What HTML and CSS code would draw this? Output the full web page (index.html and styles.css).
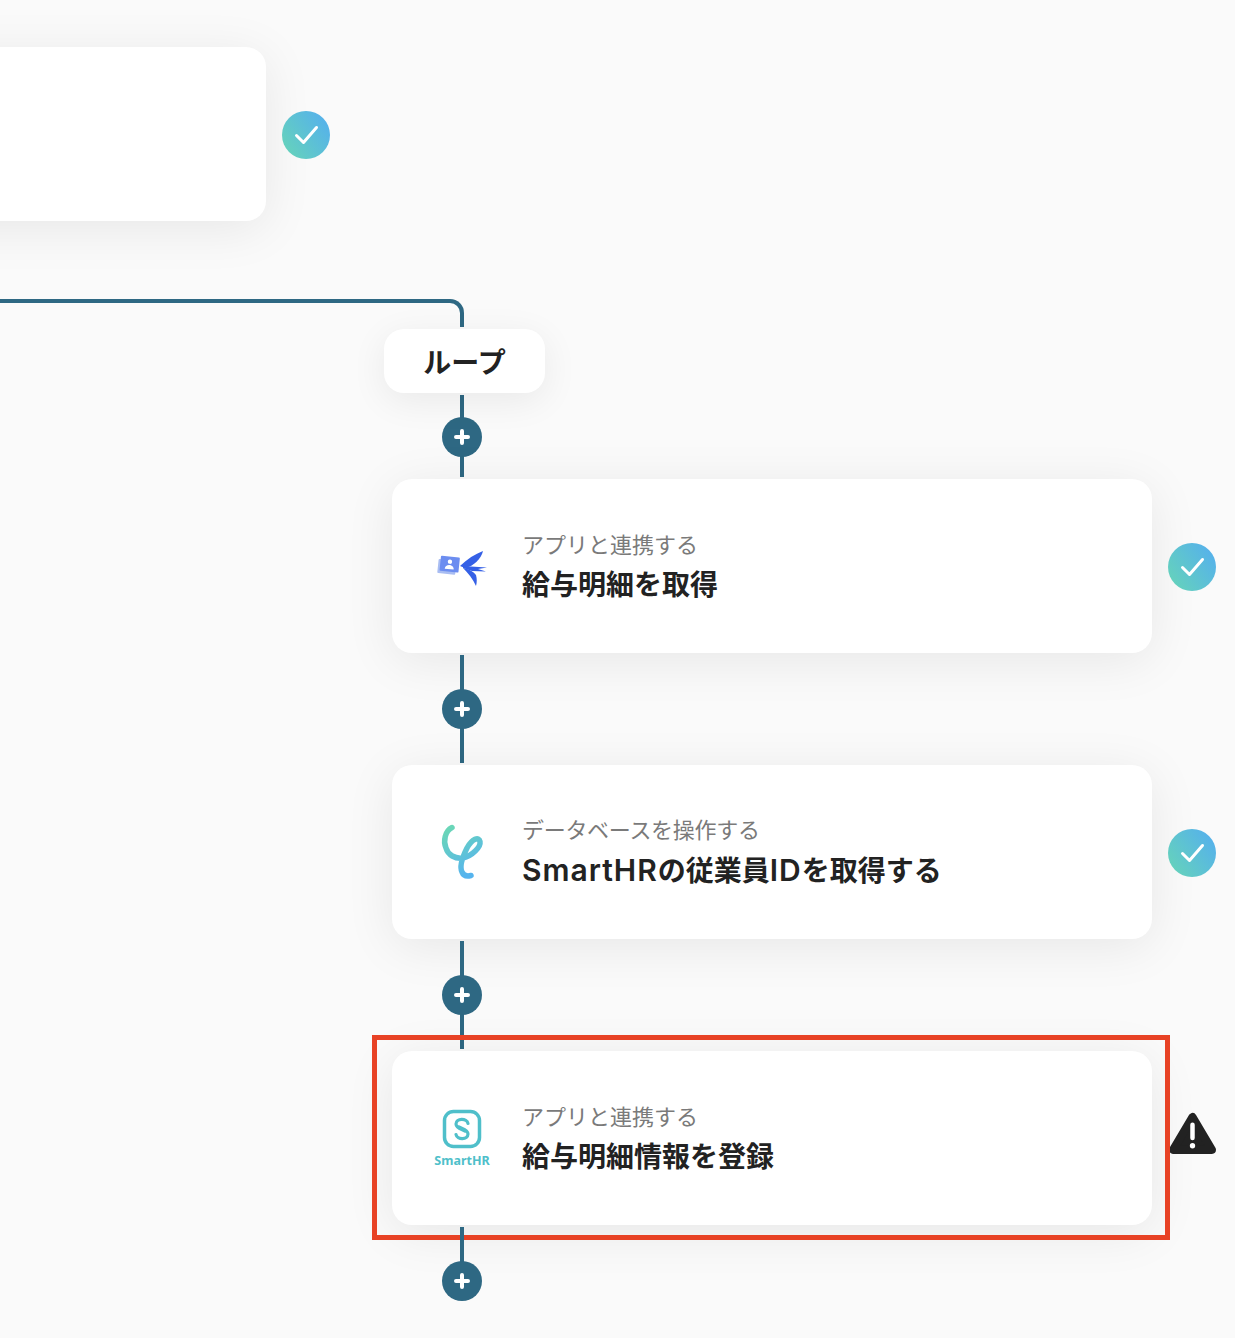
FILE: index.html
```html
<!DOCTYPE html>
<html lang="ja">
<head>
<meta charset="utf-8">
<title>Flow</title>
<link rel="stylesheet" href="styles.css">
</head>
<body>
<svg class="defs" width="0" height="0" aria-hidden="true">
  <defs>
    <linearGradient id="checkGrad" x1="0" y1="1" x2="1" y2="0.3">
      <stop offset="0" stop-color="#67d6b6"/>
      <stop offset="1" stop-color="#56b2ea"/>
    </linearGradient>
    <linearGradient id="dbGrad" x1="0.2" y1="0" x2="0.6" y2="1">
      <stop offset="0" stop-color="#6ad6b8"/>
      <stop offset="1" stop-color="#56b4ee"/>
    </linearGradient>
    <symbol id="check" viewBox="0 0 48 48">
      <circle cx="24" cy="24" r="24" fill="url(#checkGrad)"/>
      <path d="M14.5 24.5l7 7L34.500 16.500" fill="none" stroke="#fff" stroke-width="3" stroke-linecap="round" stroke-linejoin="round"/>
    </symbol>
    <symbol id="plus" viewBox="0 0 40 40">
      <circle cx="20" cy="20" r="20" fill="#2e6883"/>
      <path d="M20 14v12M14 20h12" stroke="#fff" stroke-width="4" stroke-linecap="round"/>
    </symbol>
  </defs>
</svg>

<main class="canvas">
  <div class="start-node">
    <div class="start-card"></div>
    <svg class="status-inline"><use href="#check"/></svg>
  </div>

  <div class="branch-line"></div>

  <div class="flow">
    <div class="pill">ループ</div>

    <div class="connector connector-short">
      <svg class="plus"><use href="#plus"/></svg>
    </div>

    <section class="card">
      <svg class="app-icon" viewBox="0 0 60 60">
        <g transform="rotate(6 16 30)">
          <rect x="6" y="24" width="18" height="14" rx="1" fill="#a9bdf2"/>
          <rect x="8" y="20.500" width="19" height="15" rx="1" fill="#6c8df0"/>
          <circle cx="17.500" cy="25.500" r="2.200" fill="#fff"/>
          <path d="M13 33c0-5.500 9-5.500 9 0z" fill="#fff"/>
        </g>
        <path d="M28 30C35 23 43 18 51 15 49 23 42 30 33 32z" fill="#3560e6"/>
        <path d="M31 30l24 1.500-9 1.500 8 2.500-14-.5-9-3z" fill="#3560e6"/>
        <path d="M31 32c6 1 11 4 13 7 1 4 1 7 0 11-3-7-8-13-13-18z" fill="#3560e6"/>
      </svg>
      <div class="card-text">
        <p class="card-label">アプリと連携する</p>
        <h2 class="card-title">給与明細を取得</h2>
      </div>
      <svg class="status"><use href="#check"/></svg>
    </section>

    <div class="connector">
      <svg class="plus"><use href="#plus"/></svg>
    </div>

    <section class="card">
      <svg class="app-icon" viewBox="0 0 60 60">
        <path d="M20 5.500C13 9 11 19 14 26c2 7 9 11 17 10C40 34 49 25 48 19.500 47 14 40 17 35 26c-4 8-8 18-5 24 1.500 4 5 4.500 9 3.500" fill="none" stroke="url(#dbGrad)" stroke-width="5.500" stroke-linecap="round"/>
      </svg>
      <div class="card-text">
        <p class="card-label card-label-tight">データベースを操作する</p>
        <h2 class="card-title"><span class="latin">SmartHR</span>の従業員<span class="latin">ID</span>を取得する</h2>
      </div>
      <svg class="status"><use href="#check"/></svg>
    </section>

    <div class="connector">
      <svg class="plus"><use href="#plus"/></svg>
    </div>

    <section class="card">
      <div class="smarthr">
        <svg class="smarthr-mark" viewBox="0 0 40 40">
          <rect x="2.500" y="2.500" width="35" height="35" rx="9" fill="none" stroke="#4fbfca" stroke-width="3.500"/>
          <path d="M26 14.500C25 9 14 9 14 15c0 4 5 5 9 7" fill="none" stroke="#4fbfca" stroke-width="3.200" stroke-linecap="round"/>
          <path d="M14 25.500C15 31 26 31 26 25c0-4-5-5-9-7" fill="none" stroke="#4fbfca" stroke-width="3.200" stroke-linecap="round"/>
        </svg>
        <span class="smarthr-name">SmartHR</span>
      </div>
      <div class="card-text">
        <p class="card-label">アプリと連携する</p>
        <h2 class="card-title">給与明細情報を登録</h2>
      </div>
      <svg class="status status-warning" viewBox="0 0 46 42">
        <path d="M23 5L4 37h38z" fill="#222" stroke="#222" stroke-width="8" stroke-linejoin="round"/>
        <path d="M23 12.500v13" stroke="#fff" stroke-width="4.400" stroke-linecap="round"/>
        <circle cx="23" cy="33" r="2.600" fill="#fff"/>
      </svg>
      <div class="highlight"></div>
    </section>

    <div class="connector connector-end">
      <svg class="plus"><use href="#plus"/></svg>
    </div>
  </div>
</main>
</body>
</html>
```

FILE: styles.css
```css
* { box-sizing: border-box; }

html, body {
  margin: 0;
  padding: 0;
  background: #fafafa;
}

body {
  height: 1338px;
  overflow: hidden;
  font-family: Inter, "Noto Sans CJK JP", "Noto Sans", sans-serif;
  color: #222;
}

.defs { position: absolute; }

.canvas {
  position: relative;
  width: 1235px;
  height: 1338px;
  overflow: hidden;
}

.start-node {
  position: absolute;
  left: -100px;
  top: 47px;
  display: flex;
  align-items: center;
  gap: 16px;
}

.start-card {
  width: 366px;
  height: 174px;
  background: #fff;
  border-radius: 20px;
  box-shadow: 0 8px 50px rgba(0, 0, 0, 0.08);
}

.status-inline {
  width: 48px;
  height: 48px;
  margin-top: 2px;
}

.branch-line {
  position: absolute;
  left: -20px;
  top: 299px;
  width: 484px;
  height: 28px;
  border: 4px solid #2e6883;
  border-left: 0;
  border-bottom: 0;
  border-top-right-radius: 14px;
}

.flow {
  position: absolute;
  left: 392px;
  top: 329px;
  width: 760px;
  display: flex;
  flex-direction: column;
}

.pill {
  align-self: flex-start;
  margin-left: -8px;
  width: 161px;
  height: 64px;
  display: flex;
  align-items: center;
  justify-content: center;
  background: #fff;
  border-radius: 20px;
  font-size: 28px;
  font-weight: 700;
  box-shadow: 0 8px 36px rgba(0, 0, 0, 0.07);
  position: relative;
  z-index: 1;
}

.connector {
  position: relative;
  width: 4px;
  height: 108px;
  margin: 2px 0 2px 68px;
  background: #2e6883;
}

.connector-short { height: 82px; }

.connector-end {
  height: 40px;
  margin-bottom: 0;
}

.plus {
  position: absolute;
  left: -18px;
  top: 50%;
  width: 40px;
  height: 40px;
  margin-top: -20px;
}

.connector-short .plus { margin-top: -19px; }

.connector-end .plus {
  top: 34px;
  margin-top: 0;
}

.card {
  position: relative;
  height: 174px;
  display: flex;
  align-items: center;
  gap: 30px;
  padding-left: 40px;
  background: #fff;
  border-radius: 20px;
  box-shadow: 0 8px 50px rgba(0, 0, 0, 0.08);
}

.app-icon {
  width: 60px;
  height: 60px;
  flex: none;
}

.card-text {
  display: flex;
  flex-direction: column;
  gap: 5px;
  padding-top: 2px;
}

.card-label {
  margin: 0;
  font-size: 22px;
  line-height: 30px;
  font-weight: 400;
  color: #7a7a7a;
}

.card-label-tight { letter-spacing: -0.3px; }

.card-title {
  margin: 0;
  font-size: 28px;
  line-height: 40px;
  font-weight: 700;
  color: #222;
}

.latin {
  font-size: 30px;
  font-weight: 600;
  letter-spacing: 1px;
}

.status {
  position: absolute;
  right: -64px;
  top: 64px;
  width: 48px;
  height: 48px;
}

.status-warning {
  right: -64px;
  top: 60px;
  width: 47px;
  height: 45px;
}

.smarthr {
  width: 60px;
  flex: none;
  display: flex;
  flex-direction: column;
  align-items: center;
}

.smarthr-mark {
  width: 40px;
  height: 40px;
}

.smarthr-name {
  margin-top: 5px;
  font-family: "Noto Sans", sans-serif;
  font-size: 12.500px;
  line-height: 14px;
  font-weight: 700;
  color: #4fbfca;
  white-space: nowrap;
}

.highlight {
  position: absolute;
  left: -20px;
  top: -16px;
  right: -18px;
  bottom: -15px;
  border: 5px solid #e84225;
  pointer-events: none;
}
```
